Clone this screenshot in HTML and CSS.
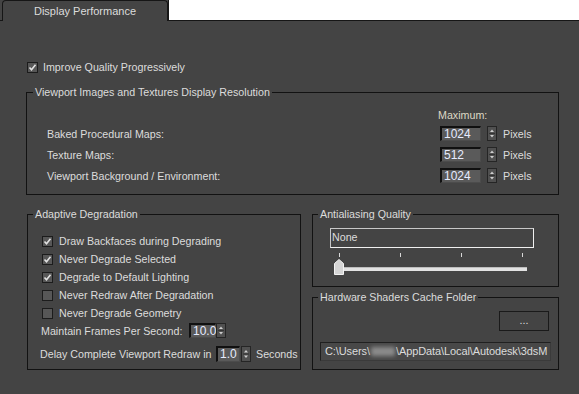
FILE: index.html
```html
<!DOCTYPE html>
<html lang="en">
<head>
  <meta charset="UTF-8" />
  <title>Display Performance</title>
  <link rel="stylesheet" href="styles.css">
</head>
<body>

  <div class="tabbar">
    <div class="tab-edge"></div>
    <div class="tab">Display Performance</div>
    <div class="tab-rest"></div>
  </div>

  <div class="panel">

    <div class="check-row top-check">
      <span class="box"><svg width="9" height="9" viewBox="0 0 9 9"><polyline points="1.5,4.5 3.5,6.8 7.5,1.8" /></svg></span>
      Improve Quality Progressively
    </div>

    <fieldset class="group res">
      <legend>Viewport Images and Textures Display Resolution</legend>
      <div class="res-body">
        <div class="res-row max-row"><span></span><span class="max-label">Maximum:</span></div>
        <div class="res-row">
          <span>Baked Procedural Maps:</span>
          <span class="ctrl">
            <span class="num w41">1024</span>
            <span class="spin"><svg width="10" height="15" viewBox="0 0 10 15"><rect x="0.5" y="0.5" width="9" height="14" /><polygon class="arr" points="3,6 5,3.5 7,6" /><line x1="2" y1="7.5" x2="8" y2="7.5" /><polygon class="arr" points="3,9 5,11.5 7,9" /></svg></span>
            <span class="unit">Pixels</span>
          </span>
        </div>
        <div class="res-row">
          <span>Texture Maps:</span>
          <span class="ctrl">
            <span class="num w41">512</span>
            <span class="spin"><svg width="10" height="15" viewBox="0 0 10 15"><rect x="0.5" y="0.5" width="9" height="14" /><polygon class="arr" points="3,6 5,3.5 7,6" /><line x1="2" y1="7.5" x2="8" y2="7.5" /><polygon class="arr" points="3,9 5,11.5 7,9" /></svg></span>
            <span class="unit">Pixels</span>
          </span>
        </div>
        <div class="res-row">
          <span>Viewport Background / Environment:</span>
          <span class="ctrl">
            <span class="num w41">1024</span>
            <span class="spin"><svg width="10" height="15" viewBox="0 0 10 15"><rect x="0.5" y="0.5" width="9" height="14" /><polygon class="arr" points="3,6 5,3.5 7,6" /><line x1="2" y1="7.5" x2="8" y2="7.5" /><polygon class="arr" points="3,9 5,11.5 7,9" /></svg></span>
            <span class="unit">Pixels</span>
          </span>
        </div>
      </div>
    </fieldset>

    <div class="cols">
      <fieldset class="group adapt">
        <legend>Adaptive Degradation</legend>
        <div class="adapt-body">
          <div class="check-row"><span class="box"><svg width="9" height="9" viewBox="0 0 9 9"><polyline points="1.5,4.5 3.5,6.8 7.5,1.8" /></svg></span>Draw Backfaces during Degrading</div>
          <div class="check-row"><span class="box"><svg width="9" height="9" viewBox="0 0 9 9"><polyline points="1.5,4.5 3.5,6.8 7.5,1.8" /></svg></span>Never Degrade Selected</div>
          <div class="check-row"><span class="box"><svg width="9" height="9" viewBox="0 0 9 9"><polyline points="1.5,4.5 3.5,6.8 7.5,1.8" /></svg></span>Degrade to Default Lighting</div>
          <div class="check-row"><span class="box"></span>Never Redraw After Degradation</div>
          <div class="check-row"><span class="box"></span>Never Degrade Geometry</div>
          <div class="spin-row fps">
            <span class="spin-label fps-label">Maintain Frames Per Second:</span>
            <span class="num w27">10.0</span>
            <span class="spin"><svg width="10" height="15" viewBox="0 0 10 15"><rect x="0.5" y="0.5" width="9" height="14" /><polygon class="arr" points="3,6 5,3.5 7,6" /><line x1="2" y1="7.5" x2="8" y2="7.5" /><polygon class="arr" points="3,9 5,11.5 7,9" /></svg></span>
          </div>
          <div class="spin-row delay">
            <span class="spin-label delay-label">Delay Complete Viewport Redraw in</span>
            <span class="num w24">1.0</span>
            <span class="spin"><svg width="10" height="16" viewBox="0 0 10 16"><rect x="0.5" y="0.5" width="9" height="15" /><polygon class="arr" points="3,6.5 5,4 7,6.5" /><line x1="2" y1="8" x2="8" y2="8" /><polygon class="arr" points="3,9.5 5,12 7,9.5" /></svg></span>
            <span class="unit">Seconds</span>
          </div>
        </div>
      </fieldset>

      <div class="right-col">
        <fieldset class="group aa">
          <legend>Antialiasing Quality</legend>
          <div class="aa-body">
            <div class="combo">None</div>
            <div class="slider">
              <div class="ticks"><i></i><i></i><i></i><i></i></div>
              <div class="track"></div>
              <svg class="thumb" width="10" height="16" viewBox="0 0 10 16"><polygon points="0.5,4.5 5,0.5 9.5,4.5 9.5,15.5 0.5,15.5" /></svg>
            </div>
          </div>
        </fieldset>

        <fieldset class="group hw">
          <legend>Hardware Shaders Cache Folder</legend>
          <div class="hw-body">
            <div class="btn-row"><span class="dots-btn">...</span></div>
            <div class="path">C:\Users\<span class="blur"></span>\AppData\Local\Autodesk\3dsM</div>
          </div>
        </fieldset>
      </div>
    </div>

  </div>

</body>
</html>
```

FILE: styles.css
```css
body {
  margin: 0;
  width: 579px;
  height: 394px;
  overflow: hidden;
  background: #444444;
  color: #dcdcdc;
  font-family: 'Liberation Sans', Arial, sans-serif;
  font-size: 10.7px;
  line-height: 14px;
}

/* tab strip */
.tabbar {
  display: flex;
  height: 21px;
}
.tab-edge {
  width: 2px;
  border-bottom: 1px solid #161616;
}
.tab {
  width: 164px;
  border: 1px solid #161616;
  border-bottom: none;
  border-radius: 4px 4px 0 0;
  text-align: center;
  line-height: 20px;
  font-size: 11px;
}
.tab-rest {
  flex: 1;
  background: #fff;
  border-left: 1px solid #161616;
  border-bottom: 1px solid #161616;
}

.panel {
  padding: 39px 20px 0 26px;
}

/* checkboxes */
.check-row {
  display: flex;
  align-items: center;
  gap: 6px;
  height: 18px;
  white-space: nowrap;
}
.top-check {
  height: 14px;
  padding-left: 1px;
  gap: 5px;
}
.box {
  width: 11px;
  height: 11px;
  box-sizing: border-box;
  border: 1px solid #1c1c1c;
  background: #575757;
  display: flex;
}
.box polyline {
  fill: none;
  stroke: #e2e2e2;
  stroke-width: 1.6;
}

/* group boxes */
.group {
  margin: 0;
  padding: 0;
  border: 1px solid #121212;
  min-width: 0;
}
.group legend {
  margin-left: 5px;
  padding: 0 2px;
  line-height: 14px;
}

.res {
  margin-top: 11px;
}
.res legend {
  margin-left: 6px;
}
.res-body {
  padding: 9px 0 11px 20px;
  display: flex;
  flex-direction: column;
  gap: 6px;
}
.res-row {
  display: grid;
  grid-template-columns: 1fr 118px;
  align-items: center;
  height: 15px;
}
.max-row {
  height: 14px;
  margin-bottom: -2px;
}
.max-label {
  margin-left: -2px;
  color: #dcd8c4;
}
.ctrl {
  display: flex;
  align-items: center;
  gap: 6px;
}

/* numeric fields and spinners */
.num {
  flex-shrink: 0;
  height: 15px;
  box-sizing: border-box;
  border-top: 2px solid #101010;
  border-left: 2px solid #101010;
  border-right: 1px solid #4c4c4c;
  border-bottom: 1px solid #4c4c4c;
  background: #5a5a5a;
  color: #e6ecff;
  font-size: 12px;
  line-height: 12px;
  padding-left: 2px;
}
.w41 { width: 41px; }
.w27 { width: 27px; }
.w24 { width: 24px; height: 16px; line-height: 13px; }
.spin {
  display: flex;
  flex-shrink: 0;
}
.spin rect {
  fill: #505050;
  stroke: #252525;
}
.spin line {
  stroke: #333;
}
.spin .arr {
  fill: #cfcfcf;
}

.cols {
  display: flex;
  gap: 11px;
  margin-top: 12px;
}
.adapt {
  margin-left: 1px;
  width: 274px;
  box-sizing: border-box;
}
.adapt-body {
  padding: 11px 0 6px 14px;
}
.spin-row {
  display: flex;
  align-items: center;
  margin-left: -1px;
  white-space: nowrap;
}
.fps {
  height: 15px;
  margin-top: 1px;
}
.delay {
  height: 16px;
  margin-top: 8px;
  margin-left: -2px;
}
.spin-label { flex-shrink: 0; }
.fps-label { width: 148px; }
.delay-label { width: 176px; }
.delay .spin { margin-left: 1px; }
.unit {
  color: #dcdcdc;
}
.delay .unit { margin-left: 5px; }

.right-col {
  flex: 1;
  display: flex;
  flex-direction: column;
  gap: 3px;
}

/* antialiasing */
.aa-body {
  padding: 7px 0 11px 17px;
}
.combo {
  width: 204px;
  height: 20px;
  box-sizing: border-box;
  border: 1px solid #c8c8c8;
  border-right-color: #f0f0f0;
  border-bottom-color: #f0f0f0;
  line-height: 17px;
  padding-left: 1px;
}
.slider {
  position: relative;
  margin: 5px 0 0 4px;
  width: 194px;
  height: 22px;
}
.ticks {
  display: flex;
  justify-content: space-between;
  padding: 0 5px;
}
.ticks i {
  width: 1px;
  height: 4px;
  background: #d8d8d8;
}
.track {
  margin: 10px 0 0 9px;
  width: 184px;
  height: 4px;
  background: #e2e2e2;
  border-top: 1px solid #bdbdbd;
  box-sizing: border-box;
}
.thumb {
  position: absolute;
  left: 0;
  top: 6px;
}
.thumb polygon {
  fill: #d4d4d4;
  stroke: #f2f2f2;
}

/* shader cache */
.hw-body {
  padding: 7px 7px 8px 7px;
}
.btn-row {
  display: flex;
  justify-content: flex-end;
}
.dots-btn {
  width: 50px;
  height: 20px;
  box-sizing: border-box;
  margin-right: 2px;
  border: 1px solid #1a1a1a;
  text-align: center;
  line-height: 16px;
}
.path {
  margin-top: 11px;
  width: 231px;
  height: 19px;
  box-sizing: border-box;
  border-top: 1px solid #202020;
  border-left: 1px solid #202020;
  border-right: 1px solid #3a3a3a;
  border-bottom: 1px solid #3a3a3a;
  background: #484848;
  padding-left: 4px;
  white-space: nowrap;
  overflow: hidden;
  line-height: 17px;
  font-size: 11px;
  letter-spacing: -0.1px;
}
.blur {
  display: inline-block;
  width: 24px;
  height: 9px;
  margin: 0 1px;
  vertical-align: -1px;
  background: #8c8c8c;
  filter: blur(2px);
}
```
